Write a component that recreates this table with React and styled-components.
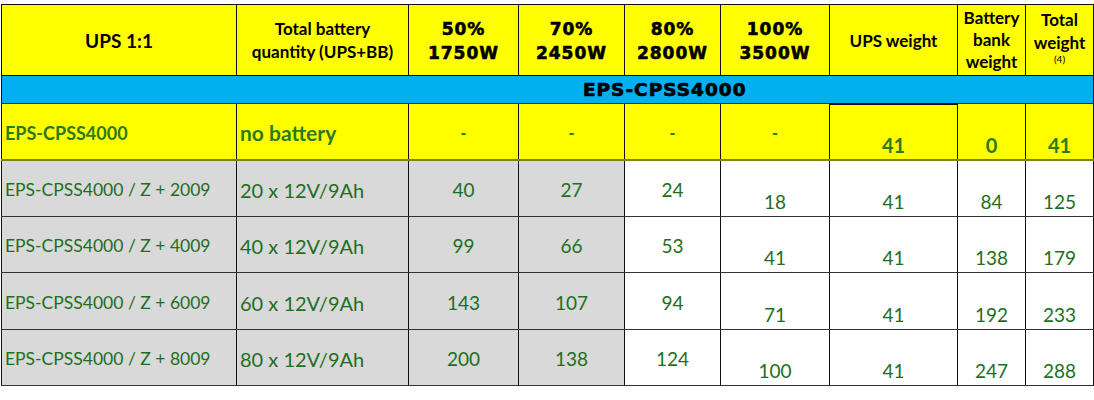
import React from "react";
import styled, { createGlobalStyle } from "styled-components";

const GlobalStyle = createGlobalStyle`
  body {
    margin: 0;
    background: #ffffff;
    font-family: Lato, "Liberation Sans", sans-serif;
  }
`;

const columns = [235, 172, 110, 106, 96, 109, 128, 68, 68];

const rows = [
  { model: "EPS-CPSS4000 / Z + 2009", qty: "20 x 12V/9Ah", loads: [40, 27, 24, 18], ups: 41, bank: 84, total: 125, h: 57 },
  { model: "EPS-CPSS4000 / Z + 4009", qty: "40 x 12V/9Ah", loads: [99, 66, 53, 41], ups: 41, bank: 138, total: 179, h: 56 },
  { model: "EPS-CPSS4000 / Z + 6009", qty: "60 x 12V/9Ah", loads: [143, 107, 94, 71], ups: 41, bank: 192, total: 233, h: 57, line: "#8a8a8a" },
  { model: "EPS-CPSS4000 / Z + 8009", qty: "80 x 12V/9Ah", loads: [200, 138, 124, 100], ups: 41, bank: 247, total: 288, h: 56 },
];

const Table = styled.table`
  border-collapse: collapse;
  table-layout: fixed;
  width: 1092px;
  margin: 4px 0 0 1px;
  color: #1e6e1e;
`;

const HeadRow = styled.tr`
  height: 71px;
`;

const HeadCell = styled.th`
  background: #ffff00;
  border: 1px solid #111;
  color: #000;
  font-family: Lato, "Liberation Sans", sans-serif;
  font-weight: 700;
  font-size: ${(p) => p.$size || 17}px;
  line-height: ${(p) => p.$lh || 23}px;
  padding: ${(p) => (p.$raise ? `0 2px ${p.$raise}px` : "0 2px")};
  text-align: center;
  vertical-align: middle;
`;

const LoadHead = styled(HeadCell)`
  font-family: "DejaVu Sans", sans-serif;
  font-size: 17px;
  letter-spacing: 1px;
  line-height: 24px;
  padding-top: 2px;
  -webkit-text-stroke: 0.6px #000;
`;

const Note = styled.span`
  display: block;
  font-size: 10px;
  line-height: 11px;
  font-weight: 400;
`;

const BandRow = styled.tr`
  height: 28px;
`;

const BandCell = styled.td`
  background: #00b0f0;
  border-top: 1px solid #1d3b2a;
  border-bottom: 1px solid #1d3b2a;
  border-left: ${(p) => (p.$first ? "1px solid #111" : "none")};
  border-right: ${(p) => (p.$first ? "none" : "1px solid #111")};
  color: #000;
  font-family: "DejaVu Sans", sans-serif;
  font-weight: 700;
  font-size: 18.5px;
  letter-spacing: 1px;
  -webkit-text-stroke: 0.7px #000;
  text-align: center;
  padding: 2px 0 0;
  line-height: 24px;
`;

const Row = styled.tr`
  height: ${(p) => p.$h}px;
`;

const Cell = styled.td`
  background: ${(p) => p.$bg || "#ffffff"};
  border-left: 1px solid #111;
  border-right: 1px solid #111;
  border-top: ${(p) => p.$top || "1px solid #333"};
  border-bottom: 1px solid #333;
  font-size: ${(p) => p.$size || 19}px;
  font-weight: ${(p) => (p.$bold ? 700 : 400)};
  color: ${(p) => (p.$bold ? "#2a7a1a" : "#1e6e1e")};
  text-align: ${(p) => p.$align || "center"};
  vertical-align: ${(p) => (p.$low ? "bottom" : "middle")};
  padding: ${(p) =>
    p.$low ? "0 2px 2px" : p.$align === "left" ? "3px 2px 0 3px" : "3px 2px 0"};
  line-height: 24px;
  white-space: nowrap;
`;

const Dash = styled.span`
  font-size: 16px;
  font-weight: 900;
`;

export default function App() {
  return (
    <>
      <GlobalStyle />
      <Table>
        <colgroup>
          {columns.map((w, i) => (
            <col key={i} style={{ width: w }} />
          ))}
        </colgroup>
        <tbody>
          <HeadRow>
            <HeadCell $size={19}>UPS 1:1</HeadCell>
            <HeadCell $size={17}>
              Total battery
              <br />
              quantity (UPS+BB)
            </HeadCell>
            <LoadHead>50%<br />1750W</LoadHead>
            <LoadHead>70%<br />2450W</LoadHead>
            <LoadHead>80%<br />2800W</LoadHead>
            <LoadHead>100%<br />3500W</LoadHead>
            <HeadCell>UPS weight</HeadCell>
            <HeadCell $lh={22}>
              Battery
              <br />
              bank
              <br />
              weight
            </HeadCell>
            <HeadCell $lh={23} $raise={8}>
              Total
              <br />
              weight
              <Note>(4)</Note>
            </HeadCell>
          </HeadRow>

          <BandRow>
            <BandCell $first />
            <BandCell colSpan={8}>EPS-CPSS4000</BandCell>
          </BandRow>

          <Row $h={56}>
            <Cell $bg="#ffff00" $bold $align="left" $size={18} $top="1px solid #111">
              EPS-CPSS4000
            </Cell>
            <Cell $bg="#ffff00" $bold $align="left" $size={21} $top="1px solid #111">
              no battery
            </Cell>
            {[0, 1, 2, 3].map((i) => (
              <Cell key={i} $bg="#ffff00" $bold $top="1px solid #111">
                <Dash>-</Dash>
              </Cell>
            ))}
            <Cell $bg="#ffff00" $bold $low $size={20} $top="2px solid #111">41</Cell>
            <Cell $bg="#ffff00" $bold $low $size={20} $top="1px solid #111">0</Cell>
            <Cell $bg="#ffff00" $bold $low $size={20} $top="1px solid #111">41</Cell>
          </Row>

          {rows.map((r, idx) => {
            const top = idx === 0 ? "2px solid #7f7f20" : `1px solid ${r.line || "#333"}`;
            return (
              <Row key={r.model} $h={r.h}>
                <Cell $bg="#d9d9d9" $align="left" $size={17.5} $top={top}>
                  {r.model}
                </Cell>
                <Cell $bg="#d9d9d9" $align="left" $size={20} $top={top}>
                  {r.qty}
                </Cell>
                {r.loads.map((v, i) => (
                  <Cell key={i} $bg={i < 2 ? "#d9d9d9" : "#ffffff"} $low={i === 3} $top={top}>
                    {v}
                  </Cell>
                ))}
                {[r.ups, r.bank, r.total].map((v, i) => (
                  <Cell key={`w${i}`} $low $top={top}>
                    {v}
                  </Cell>
                ))}
              </Row>
            );
          })}
        </tbody>
      </Table>
    </>
  );
}
